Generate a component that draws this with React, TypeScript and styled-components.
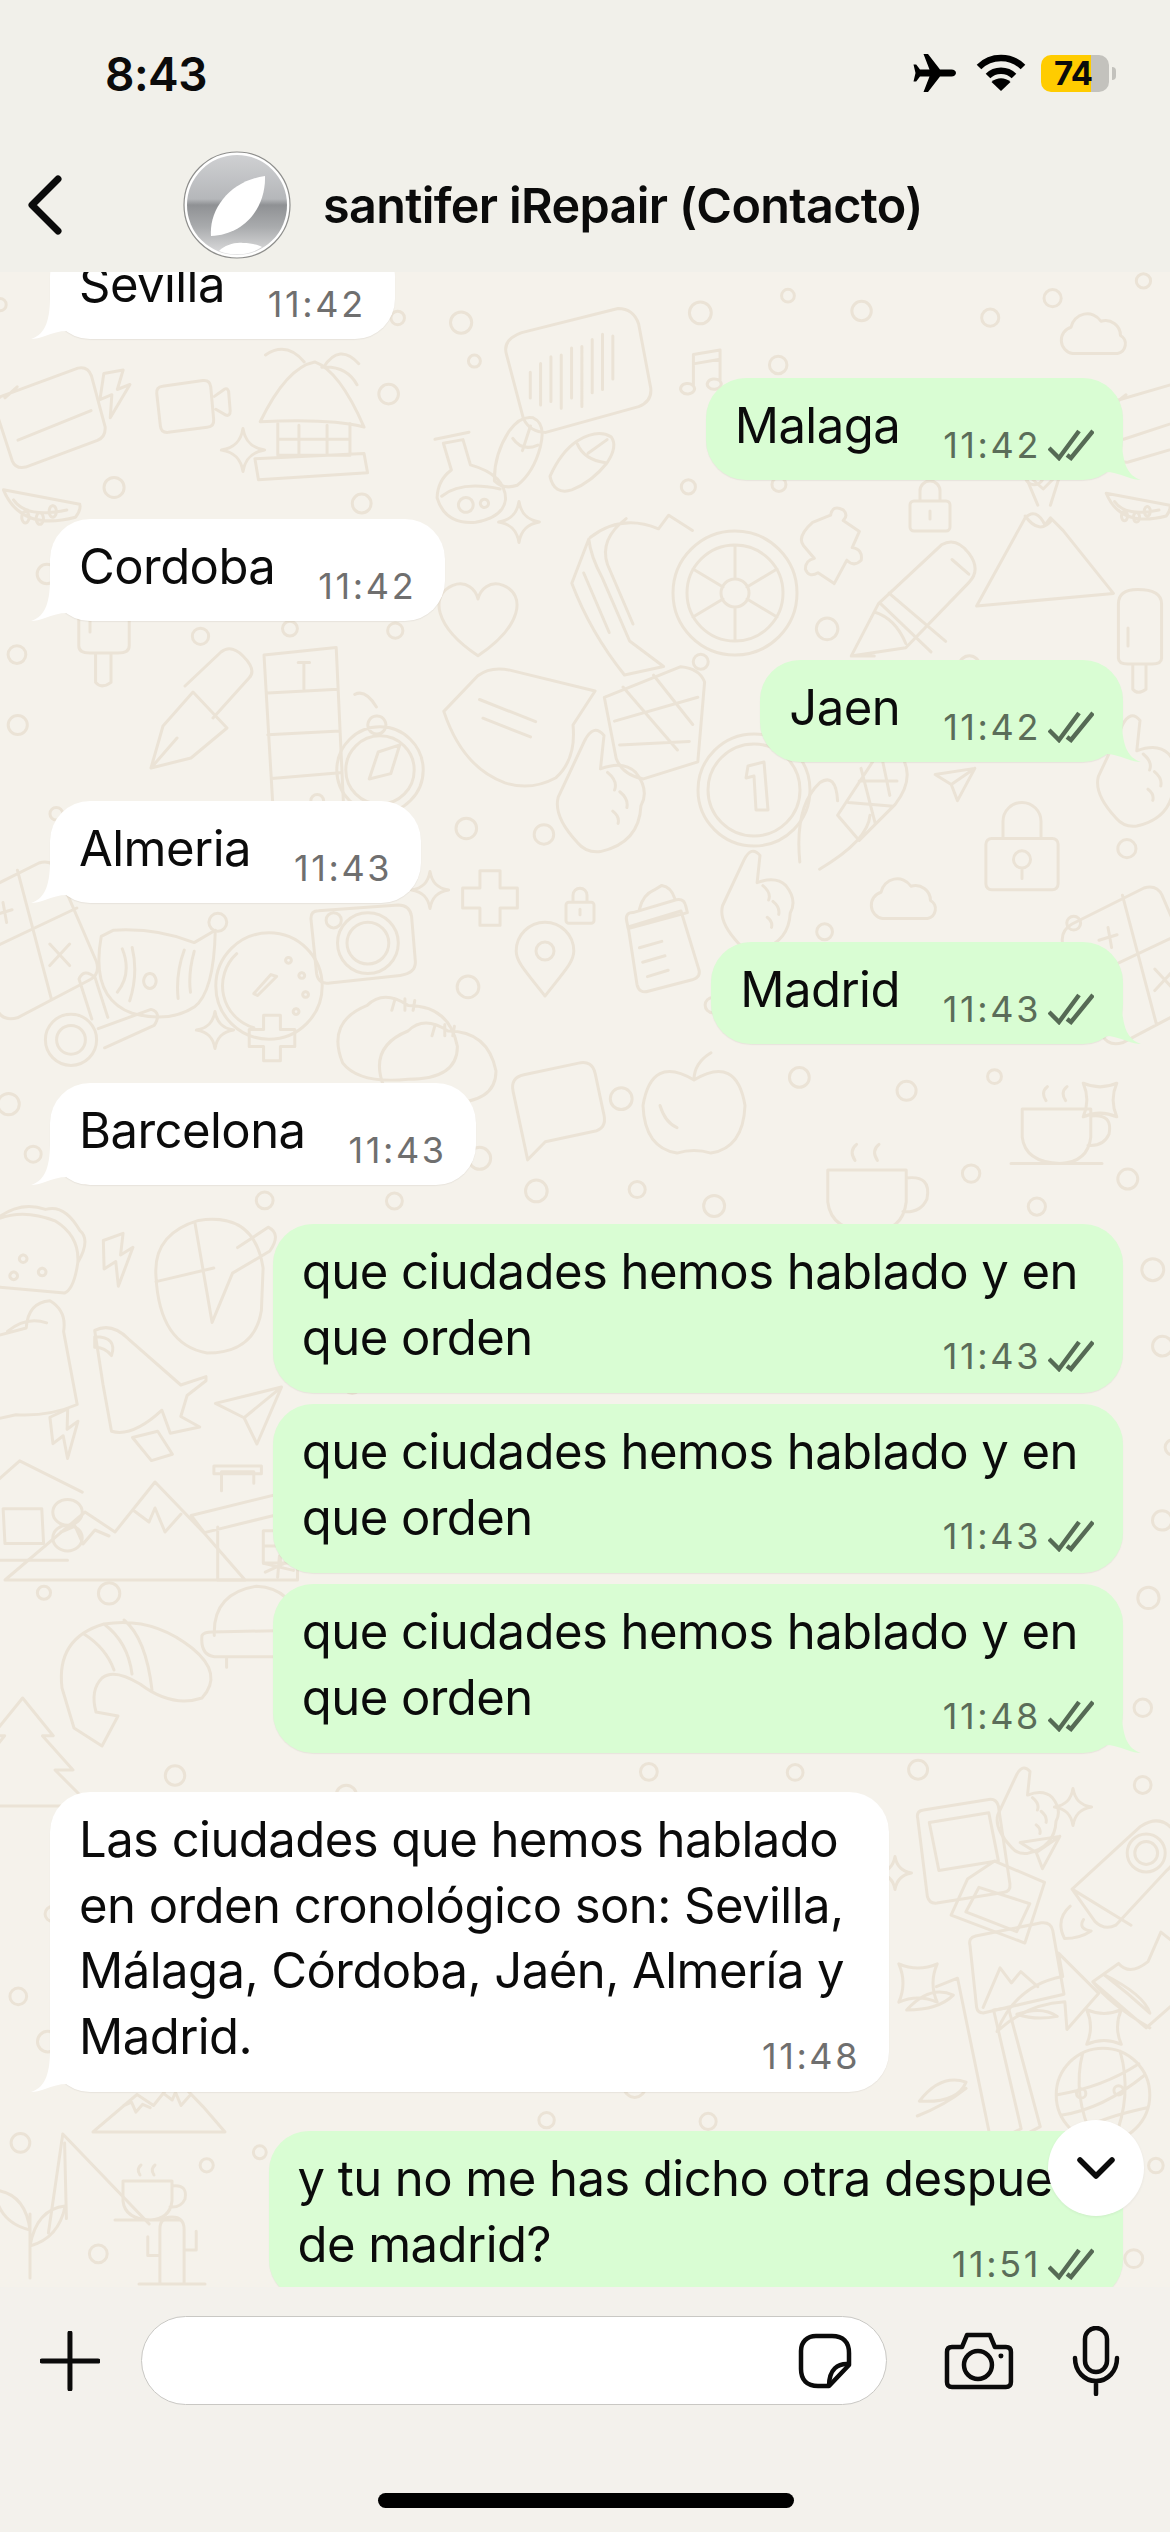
import React from "react";
import styled, { createGlobalStyle } from "styled-components";

const Global = createGlobalStyle`
  html, body { margin: 0; padding: 0; background: #f3f1ec; }
  * { box-sizing: border-box; }
`;

const Page = styled.div`
  width: 1170px;
  height: 2532px;
  display: flex;
  flex-direction: column;
  font-family: Inter, "Liberation Sans", sans-serif;
  color: #0b0b0b;
  overflow: hidden;
`;

const Top = styled.header`
  height: 272px;
  flex: none;
  background: #f1f0ea;
  display: flex;
  flex-direction: column;
`;

const StatusBar = styled.div`
  height: 148px;
  display: flex;
  align-items: flex-start;
  justify-content: space-between;
  padding: 48px 54px 0 105px;
`;

const Clock = styled.div`
  font-size: 46px;
  font-weight: 600;
  line-height: 52px;
  letter-spacing: -0.5px;
`;

const StatusIcons = styled.div`
  display: flex;
  align-items: center;
  padding-top: 6px;
  gap: 19px;
`;

const Battery = styled.div`
  width: 68px;
  height: 37px;
  border-radius: 10px;
  background: linear-gradient(90deg, #ffcc00 0 50px, #c3c2bd 50px);
  font-size: 33px;
  font-weight: 700;
  line-height: 37px;
  letter-spacing: -0.5px;
  padding-left: 13px;
  position: relative;
  margin: 0 7px 0 -4px;
  &::after {
    content: "";
    position: absolute;
    right: -7px;
    top: 12px;
    width: 4px;
    height: 13px;
    border-radius: 0 6px 6px 0;
    background: #c3c2bd;
  }
`;

const NavBar = styled.div`
  flex: 1;
  display: flex;
  align-items: center;
  padding: 0 0 10px 27px;
`;

const BackIcon = styled.svg`
  width: 36px;
  height: 60px;
  margin-right: 120px;
`;

const Avatar = styled.svg`
  width: 108px;
  height: 108px;
  margin-right: 32px;
`;

const Title = styled.div`
  font-size: 48.5px;
  font-weight: 600;
  letter-spacing: -0.65px;
  white-space: nowrap;
`;

const Chat = styled.main`
  flex: 1;
  min-height: 0;
  background: #f5f2eb;
  position: relative;
  overflow: hidden;
`;

const Wallpaper = styled.svg`
  position: absolute;
  inset: 0;
  width: 1170px;
  height: 2015px;
`;

const List = styled.div`
  position: relative;
  display: flex;
  flex-direction: column;
  margin-top: -35px;
  padding: 0 47px 0 50px;
`;

const Bubble = styled.div<{ $out?: boolean; $tight?: boolean; $stacked?: boolean }>`
  position: relative;
  align-self: ${(p) => (p.$out ? "flex-end" : "flex-start")};
  display: flex;
  flex-direction: ${(p) => (p.$stacked ? "column" : "row")};
  min-height: 102px;
  margin-top: ${(p) => (p.$tight ? "11px" : "39px")};
  padding: 15px ${(p) => (p.$stacked ? "45px" : "29px")} 15px 29px;
  padding-bottom: ${(p) => (p.$stacked ? "16.600px" : "15px")};
  background: ${(p) => (p.$out ? "#d9fdd3" : "#ffffff")};
  border-radius: 40px;
  box-shadow: 0 1px 1px rgba(90, 80, 60, 0.08);
  &:first-child { margin-top: 0; }
`;

const Text = styled.div`
  font-size: 49px;
  line-height: 65.7px;
  white-space: nowrap;
  letter-spacing: -0.55px;
  color: #0b0b0b;
`;

const Meta = styled.div<{ $out?: boolean; $stacked?: boolean }>`
  display: flex;
  align-items: center;
  align-self: flex-end;
  gap: 7px;
  height: 40px;
  margin-top: ${(p) => (p.$stacked ? "-34px" : "31px")};
  margin-left: ${(p) => (p.$stacked ? "0" : "43px")};
  margin-right: ${(p) => (p.$stacked ? "-16px" : "0")};
  font-size: 36px;
  line-height: 40px;
  letter-spacing: 2.6px;
  color: ${(p) => (p.$out ? "#5b6d59" : "#6f6f6f")};
`;

const Ticks = styled.svg`
  width: 46px;
  height: 32px;
`;

const Tail = styled.svg<{ $out?: boolean }>`
  position: absolute;
  bottom: 0;
  width: 36px;
  height: 44px;
  ${(p) => (p.$out ? "right: -18px;" : "left: -19px;")}
`;

const Footer = styled.footer`
  height: 245px;
  flex: none;
  background: #f3f1ec;
  display: flex;
  flex-direction: column;
  position: relative;
`;

const InputRow = styled.div`
  display: flex;
  align-items: center;
  padding: 29px 50px 0 40px;
  height: 118px;
`;

const Plus = styled.svg`
  width: 60px;
  height: 60px;
  margin-right: 41px;
`;

const InputPill = styled.div`
  width: 747px;
  height: 89px;
  border-radius: 45px;
  background: #fff;
  border: 1.5px solid #c9c8c4;
  display: flex;
  align-items: center;
  justify-content: flex-end;
  padding-right: 34px;
  margin-right: 56px;
`;

const Sticker = styled.svg`
  width: 54px;
  height: 56px;
`;

const CameraIcon = styled.svg`
  width: 72px;
  height: 58px;
  margin-right: 57px;
`;

const MicIcon = styled.svg`
  width: 48px;
  height: 70px;
  flex: none;
`;

const HomeBar = styled.div`
  position: absolute;
  left: 378px;
  bottom: 24px;
  width: 416px;
  height: 15px;
  border-radius: 8px;
  background: #000;
`;

const ScrollButton = styled.div`
  position: absolute;
  left: 1048px;
  top: 1848px;
  width: 96px;
  height: 96px;
  border-radius: 50%;
  background: #fff;
  box-shadow: 0 1px 3px rgba(0, 0, 0, 0.06);
  display: flex;
  align-items: center;
  justify-content: center;
`;

const c = (x: number, y: number, r: number) =>
  `M${x - r} ${y}a${r} ${r} 0 1 0 ${2 * r} 0a${r} ${r} 0 1 0 ${-2 * r} 0`;

const shapes: Record<string, string> = {
  heart: "M0 34C-42 6-46-24-24-33C-11-38-2-29 0-20C2-29 11-38 24-33C46-24 42 6 0 34Z",
  star: "M0-30C3-12 12-3 30 0C12 3 3 12 0 30C-3 12-12 3-30 0C-12-3-3-12 0-30Z",
  starq: "M-24-24C-8-17 8-17 24-24C17-8 17 8 24 24C8 17-8 17-24 24C-17 8-17-8-24-24Z",
  plane: "M-32-12L32-22L4 30L-6 4ZM-6 4L32-22",
  bolt: "M-12-32L-24 4L-6 0L-14 32L22-10L3-6L16-32Z",
  pin: `M0 40C-22 12-32 2-32-10A32 32 0 0 1 32-10C32 2 22 12 0 40Z${c(0, -10, 10)}`,
  lock: `M-32-10h64a6 6 0 0 1 6 6v42a6 6 0 0 1-6 6h-64a6 6 0 0 1-6-6v-42a6 6 0 0 1 6-6ZM-20-10v-18a20 20 0 0 1 40 0v18${c(0, 12, 9)}M0 21v11`,
  lockS: "M-16-4h32a4 4 0 0 1 4 4v22a4 4 0 0 1-4 4h-32a4 4 0 0 1-4-4V0a4 4 0 0 1 4-4ZM-10-4v-10a10 10 0 0 1 20 0v10M0 6v8",
  camera: `M-50-36Q-58-36-58-28L-52 30Q-50 42-38 40L36 32Q52 30 52 18L48-30Q46-42 34-42Z${c(2, -2, 32)}${c(2, -2, 22)}${c(-34, -26, 8)}`,
  video: "M-34-26L22-34Q32-35 33-25L37 20Q38 30 28 31L-26 38Q-36 39-37 29L-42-16Q-43-25-34-26ZM38-12L52-22Q58-24 58-16L60 8Q60 16 54 14L40 6",
  cloud: "M-30 18A18 18 0 0 1-32-17A22 22 0 0 1 8-25A20 20 0 0 1 34-6A13 13 0 0 1 30 18Z",
  polaroid: "M-44-40Q-46-48-38-49L30-60Q38-61 40-53L52 28Q53 36 45 37L-24 48Q-32 49-34 41ZM-32-36L30-46L40 4L-22 14Z",
  polaroid2: "M-36-34L-3-56L58-30L34 44L-56 10ZM-22-24L40-4L24 30L-38 6Z",
  image: "M-50-22Q-52-30-44-32L26-46Q36-47 38-38L50 30L-36 50Q-42 50-43 44ZM-36 44L-18 2L-6 18L4 6L22 22",
  rocket: `M-42 18L30-48Q52-62 66-42Q78-20 58-2L4 56Q-8 62-18 52Z M-42 18L20 56${c(36, -20, 20)}${c(36, -20, 12)}M-44 36Q-60 50-50 70Q-34 70-22 62Q-36 60-30 50`,
  shuttle: "M-46-52Q-30-60-14-44L36 0L60-8L60-4L42 10L36 30L54 40L26 46L18 24Q-10 50-30 44L-38 0L-46-52ZM-46-46Q-24-46-30-28Q-36-36-46-36ZM-10 50L14 44L28 66L8 72Z",
  arrow: "M-50 42Q-32-2 12-10L8-32L46 6L16 40L14 14Q-22 16-50 42Z",
  mountains: "M-140 58L-60-10L-30 10L10-40L60 12L100 58ZM-84 10L-70 4L-62 22L-50 8L-36 14M-12-12L4 0L10-14L20 10L36-8",
  house: "M-62-10L60-40L74-22L-48 8ZM-34 2V58H50V-20M-30-36V-56H4V-44M-38-62H12V-54H-38ZM14 6H50V40H14ZM32 6V40M14 22H50",
  cabin: "M-30-30L4-60L72-26M-28-28V48H56M-14-8H28L30 30H-12ZM56-18a16 14 0 1 1 0 28a16 14 0 1 1 0-28M56 10a16 14 0 1 1 0 28a16 14 0 1 1 0-28",
  taco: "M-48 30Q-64-10-44-36Q-16-50 20-36Q46-20 44 8Q40 36 30 40L-38 34ZM-44-36Q-18-58 10-48Q30-54 46-26Q58-16 44 8M-14 0a4 4 0 1 0 1 0M-24 18a4 4 0 1 0 1 0M6 14a4 4 0 1 0 1 0",
  shrimp: "M-70 20Q-76-30-28-44Q20-52 60-20Q92 6 70 30Q40 40 8 16Q-18 0-30 10Q-42 22-36 44L-14 48L-30 78L-58 60ZM-48-34Q-26-20-18 2M-28-44Q-4-26 0 6M-8-48Q14-30 20 22",
  tree: "M-6-60L28-18L16-18L50 20L30 20L70 60L-70 60L-40 20L-56 20L-26-18L-40-18Z",
  globe: `${c(0, 0, 60)}M-54 26Q0 18 54-26M-60 0Q0-10 46-40M-36 48Q0 28 58 16M-26-54Q-40 0-12 58M22-56Q38 0 14 58${c(-28, -2, 6)}${c(20, -6, 6)}`,
  bamboo: "M-44-72L-24-80L8 76L36 62L10-50L24-52L54 60L24 76M-72-50Q-50-74-28-64Q-42-50-72-50M-60 36Q-40 10-16 18Q-24 38-60 36M-62 50Q-36 40-16 24M32-46Q56-54 70-44Q50-40 32-46",
  slice: "M-48 2L-20-18Q-8-4 12-20L26-52L54-30Q70-10 60 8L10 52ZM-48 2Q-30 26 14 52M-36-6Q-10 14 14 36Q8 16-36-6",
  wheel: `${c(0, 0, 62)}${c(0, 0, 48)}${c(0, 0, 14)}M0-48V-14M0 14V48M-42-24L-12-6M42-24L12-6M-42 24L-12 6M42 24L12 6`,
  backpack: "M-70-62Q-34-90 10-72L22-88L50-70M-92-8L-72-60Q-70-40-56-14L-24 60L16 90L-30 100Q-70 50-92-8ZM-50-30L-20 40M-78-20L-48 50M-28-84Q-60-60-50-30",
  gauge: `${c(0, 0, 56)}M-34-34A46 46 0 0 0-16 44M8-10L-12 10L-16 8L2-12Z M20-30a3 3 0 1 0 1 0M34-14a3 3 0 1 0 1 0M38 6a3 3 0 1 0 1 0M28 24a3 3 0 1 0 1 0`,
  clock: `${c(0, 0, 56)}${c(0, 0, 46)}M-6-24L10-28L14 20L2 20L0-14L-8-12Z`,
  bottle: "M-36-10L30-30L52 42Q56 52 44 56L-10 70Q-22 74-25 62ZM-38-18Q-40-28-30-28L24-44Q34-46 36-36L38-28L-36-8ZM-22-32Q-18-50-4-56L6-62Q18-60 22-46M-22 16L6 8M-18 34L10 26M-12 52L14 44",
  flip: "M-24 50Q-36 16-26-22Q-18-48 0-50Q20-48 22-14Q24 22 8 46Q-8 58-24 50ZM-18-14Q0 0 18-16M0-2V-38",
  flip2: "M-50 24Q-34-12-10-28Q20-46 40-34Q50-20 34 4Q12 32-18 44Q-44 52-50 24ZM-10-24Q0 0 32 4M6-10L34-30",
  flask: `M-8-48L16-44L14-12Q50 14 40 42Q30 62-4 56Q-40 46-38 12Q-30-8-10-14ZM-16-56L26-50M-32 12Q-4 2 38 28${c(-8, 32, 9)}${c(14, 38, 5)}`,
  melon: "M-48-28Q-24 30 52 10Q60 0 58-8ZM-34-14Q-16 12 40 0M-18 2a5 8 0 1 0 1 0M2 4a5 8 0 1 0 1 0M20-6a5 8 0 1 0 1 0",
  volcano: "M-76 60L-22-38Q-10-50 0-30L6-38L20-24L76 46ZM-22-40Q-6-18 8-36M-8-52L-24-90L-2-70L18-90L6-52",
  puzzle: "M-26-34L-6-42Q-4-54 8-48Q14-42 8-36L26-24L18-6Q30-4 28 8Q20 16 12 8L-2 34L-20 22Q-30 28-34 18Q-34 8-24 6L-36-8Q-44-18-26-34Z",
  pencil: "M-56 42L-30-8L30-64Q44-72 56-56Q68-40 56-28L-4 34ZM-34 0Q-14 6-4 30M-56 42L-34 42M-20-18L34 28M-28-8L20 38M40-50L56-36",
  pop: "M-36-60Q-36-84-4-84Q36-84 36-60L36 30Q36 40 20 40L-20 40Q-36 40-36 30ZM-12 40V82Q-4 92 10 82V40M-20-20V10",
  pen: "M-50 52L-38 10L-8-24L26 12L-10 42ZM-50 52L-24 22M-16-30L20-64Q30-72 42-60Q56-46 48-38L12 2",
  ruler: "M-40-80L36-88L44 84L-30 90ZM-36-40L38-44M-32 50L40 44M-4-72L8-72M2-72V-44M-36 4L40 0",
  compass: `${c(0, 0, 48)}${c(0, 0, 38)}M-12 10L-2-20L22-28L12 4ZM-4-60a10 10 0 1 0 1 0M-4-70Q-16-90-28-84`,
  note: "M-72-16L-32-58Q-16-70 8-64L106-40L80 0Q84 40 60 62Q30 78 0 68Q-50 50-72-16ZM-30-30L36-4M-26-8L30 14",
  rubik: "M-62-22L28-58Q50-56 56-40L48 54L-16 74Q-40 70-48 50ZM-40-34L24 40M-4-48L42 10M-50 6L48-22M-44 34L38 30",
  hand: "M-30 60Q-58 30-52 8L-22-56Q-12-76 0-62L-4-24Q22-34 36-20Q52 0 42 18Q40 60-4 70Q-20 72-30 60ZM4-20Q16-10 12 0M18 2Q28 10 26 20M10 24Q18 30 16 38",
  corn: "M-48 60Q-54-2-26-28Q-8-40-6-8M-26 68Q28 36 30 8M-6 8L36-56Q54-72 68-52Q78-30 58-4L18 36ZM6-6L56-2M18-30L60-30M20-44L36 18M42-62L52-14",
  hut: "M-60 2Q-30-60 2-66Q30-56 58 8Q20-2-60 2ZM-40 4V40H42V4M-16 6V40M16 6V40M-40 22H42M-66 44L58 38L62 60L-62 68ZM-10-66Q-30-90-54-74M12-60Q30-88 52-64M10-60Q38-62 50-40",
  calendar: "M-64-30L46-62Q60-64 64-50L78 22Q78 36 66 40L-36 70Q-50 72-54 60L-72-12Q-74-24-64-30ZM-58-28L-40-42M-44 32L60-2",
  wave: "M-62-26L50-54Q68-54 74-36L88 38Q90 54 74 60L-34 90Q-52 90-60 74L-80-2Q-84-18-62-26ZM-52 20V50M-40 10V58M-28 2V54M-16 0V62M-4-8V50M8-10V60M20-18V44M32-24V40M44-22V28",
  note2: "M-20 24V-30L26-38V14M-20 24a12 9 0 1 1-1-1M26 16a12 9 0 1 1-1-1M-20-14L26-22",
  calc: "M-70-40L10-80Q24-84 30-72L74 30Q78 44 66 50L-14 92Q-30 96-36 84L-80-16Q-84-32-70-40ZM-58 22L52-30M-14-72L24 72M-40-22L-20-28M-30-36L-26-14M22 10L44 34M44 10L22 34",
  catbowl: "M-90-30Q-108 70-40 94Q20 110 60 84Q92 60 94-40L60-20Q0-44-70-40ZM-56-10Q-40 30-64 60M-40-12Q-30 30-44 74M44-8Q30 30 34 70M60-6Q50 30 54 60M-12 30a10 12 0 1 0 1 0",
  mouse: "M-60-10Q-64-60-10-76Q56-86 66-20L64 30Q56 80 0 80Q-56 70-60-10ZM-60-4L8-20M-14-72L6 44L30-14L74-40Q88-60 72-68L36-44",
  boot: "M-60-26L-8-40Q-6-70 20-72Q40-60 36-36L52 50Q20 64-20 62L-56 70M-30-36Q-8-54 16-46",
  beanie: "M-44 4Q-46-44 4-52Q46-50 54-4M-58 4Q-60 26-44 28H50Q68 26 64 6Q62-2 50-2L-46 0Q-56 0-58 4ZM-30 28V40M28-62L30-86M12-78L46-70M14-68L44-82",
  apple: "M0-20Q-50-50-60 10Q-58 60-20 66Q0 60 20 66Q58 60 60 10Q50-50 0-20ZM0-20Q0-40 20-52M-40 10Q-34 30-20 36",
  cup: "M-54-30H44V10Q40 46 0 48Q-50 46-54 10ZM44-20Q76-24 70 6Q62 24 40 22M-20-42Q-28-54-18-62M8-42Q0-54 10-62M-70 48H60",
  triangle: "M-54 70L-38-40L58 60M-36-30L-34 54",
  plant: "M0 60V-20M0 0Q-40-10-44-50Q-6-46 0 0ZM0 20Q36 10 44-30Q8-26 0 20Z",
  cactus: "M-22 62V-38Q-22-60 0-60Q22-60 22-38V62ZM-22 10H-44V-24M22 0H44V-34M-60 62H60",
  bubble2: "M-60 40V-40Q-60-60-40-60H40Q60-60 60-40V20Q60 40 40 40H-30L-60 60Z",
  dumpling: "M-70 40Q-90-10-40-30Q-20-50 10-30Q60-30 70 20Q70 60 10 60Q-50 66-70 40ZM-6-38L-10-24M6-38L6-24M18-36L16-24",
  cross: "M-14-38H14V-14H38V14H14V38H-14V14H-38V-14H-14Z",
  scissors: `${c(-30, 6, 32)}${c(-30, 6, 18)}M-4-20L-20-70Q-14-84 0-72L16-22M4-8L70-32Q84-28 74-12L12 16`,
};

type Doodle = [string, number, number, number?, number?];

const doodles: Doodle[] = [
  ["calendar", 48, 415, 0.72, -4], ["hut", 313, 420, 0.88], ["video", 187, 405, 0.72], ["bolt", 116, 394, 0.7, -10],
  ["wave", 575, 355, 0.86], ["note2", 705, 372, 0.58], ["flip", 522, 452, 0.72, 18], ["flip2", 584, 460, 0.68],
  ["star", 243, 450, 0.72], ["flask", 463, 478, 0.82, -20], ["star", 519, 522, 0.68], ["melon", 38, 510, 0.72],
  ["wheel", 735, 593, 1.0], ["backpack", 650, 590, 0.85], ["volcano", 1045, 552, 0.9], ["lockS", 930, 505, 1],
  ["puzzle", 836, 553, 0.9], ["pencil", 910, 612, 1.05], ["heart", 478, 620, 1.05], ["pop", 104, 625, 0.7],
  ["pen", 201, 716, 1], ["ruler", 302, 731, 0.95], ["compass", 380, 770, 0.9], ["note", 505, 725, 0.85],
  ["rubik", 657, 716, 0.85], ["hand", 604, 790, 0.88], ["clock", 754, 790, 1], ["corn", 843, 808, 0.9],
  ["plane", 955, 782, 0.62], ["lock", 1022, 848, 0.95], ["calc", 30, 935, 0.9], ["catbowl", 157, 955, 0.62],
  ["camera", 366, 945, 0.95], ["gauge", 269, 986, 0.95], ["pin", 545, 960, 0.9], ["bottle", 657, 935, 0.8],
  ["cross", 490, 898, 0.72], ["cross", 272, 1038, 0.6], ["star", 215, 1030, 0.62], ["scissors", 95, 1035, 0.8],
  ["dumpling", 400, 1030, 0.82], ["dumpling", 440, 1055, 0.8], ["lockS", 580, 905, 0.7], ["star", 430, 890, 0.62],
  ["hand", 760, 900, 0.72], ["cloud", 905, 905, 0.75], ["starq", 1100, 1100, 0.7], ["apple", 694, 1097, 0.85],
  ["cup", 871, 1194, 0.8], ["cup", 1060, 1130, 0.7], ["bubble2", 560, 1110, 0.7, -12],
  ["taco", 36, 1255, 0.95], ["mouse", 207, 1285, 0.85], ["bolt", 120, 1260, 0.75, -20], ["shuttle", 143, 1385, 1.05],
  ["bolt", 67, 1434, 0.7, -25], ["plane", 250, 1413, 1.05, -5], ["boot", 33, 1362, 0.85], ["cabin", 16, 1516, 0.92],
  ["mountains", 145, 1522, 1], ["house", 250, 1525, 0.95], ["shrimp", 132, 1668, 1], ["beanie", 253, 1632, 0.88],
  ["tree", 28, 1752, 0.9], ["polaroid", 960, 1857, 0.96], ["polaroid2", 997, 1907, 0.82], ["image", 1017, 1966, 0.94],
  ["rocket", 1112, 1872, 0.95], ["arrow", 1050, 1987, 1.06], ["slice", 1137, 1980, 0.92], ["bamboo", 983, 2063, 1.06],
  ["globe", 1103, 2095, 0.78], ["star", 1073, 1807, 0.62], ["star", 895, 1873, 0.55], ["starq", 918, 1983, 0.8],
  ["starq", 1104, 2027, 0.72], ["plane", 1040, 1850, 0.62], ["triangle", 97, 2170, 0.9], ["cup", 150, 2196, 0.5],
  ["plant", 30, 2230, 0.8], ["cactus", 172, 2250, 0.55], ["mountains", 170, 2100, 0.55], ["cloud", 1095, 340, 0.75],
  ["hand", 1030, 1810, 0.62], ["pop", 1140, 640, 0.6], ["melon", 1135, 510, 0.6], ["calendar", 1150, 420, 0.6],
  ["calc", 1135, 960, 0.9], ["hand", 1140, 770, 0.8],
];

const seeded = (n: number) => {
  const s = Math.sin(n * 127.1) * 43758.5453;
  return s - Math.floor(s);
};

const dots: [number, number, number][] = [];
for (let gy = 0; gy < 23; gy++) {
  for (let gx = 0; gx < 14; gx++) {
    const i = gy * 14 + gx;
    const x = gx * 86 + seeded(i) * 60;
    const y = 272 + gy * 88 + seeded(i + 500) * 60;
    const r = 6 + seeded(i + 900) * 5;
    const clear = doodles.every(([, dx, dy, s = 1]) => Math.hypot(dx - x, dy - y) > 62 * s + r + 4);
    if (clear) dots.push([x, y, r]);
  }
}

const Ticksvg = () => (
  <Ticks viewBox="0 0 46 32" fill="none" stroke="#566a55" strokeWidth="4.4">
    <path d="M1 19l10 10L31 2" />
    <path d="M19 26l4 3L45 2" />
  </Ticks>
);

const TailIn = () => (
  <Tail viewBox="0 0 36 44" fill="#ffffff">
    <path d="M0 44C12 40 19 30 19 2L36 36C28 36 22 38 14 41C9 43 4 44 0 44Z" />
  </Tail>
);

const TailOut = () => (
  <Tail $out viewBox="0 0 36 44" fill="#d9fdd3">
    <path d="M36 44C24 40 17 30 17 2L0 36C8 36 14 38 22 41C27 43 32 44 36 44Z" />
  </Tail>
);

type Msg = { lines: string[]; time: string; out?: boolean; tight?: boolean; tail?: boolean };

const messages: Msg[] = [
  { lines: ["Sevilla"], time: "11:42", tail: true },
  { lines: ["Malaga"], time: "11:42", out: true, tail: true },
  { lines: ["Cordoba"], time: "11:42", tail: true },
  { lines: ["Jaen"], time: "11:42", out: true, tail: true },
  { lines: ["Almeria"], time: "11:43", tail: true },
  { lines: ["Madrid"], time: "11:43", out: true, tail: true },
  { lines: ["Barcelona"], time: "11:43", tail: true },
  { lines: ["que ciudades hemos hablado y en", "que orden"], time: "11:43", out: true },
  { lines: ["que ciudades hemos hablado y en", "que orden"], time: "11:43", out: true, tight: true },
  { lines: ["que ciudades hemos hablado y en", "que orden"], time: "11:48", out: true, tight: true, tail: true },
  {
    lines: [
      "Las ciudades que hemos hablado",
      "en orden cronológico son: Sevilla,",
      "Málaga, Córdoba, Jaén, Almería y",
      "Madrid.",
    ],
    time: "11:48",
    tail: true,
  },
  { lines: ["y tu no me has dicho otra despues", "de madrid?"], time: "11:51", out: true },
];

export default function App() {
  return (
    <Page>
      <Global />
      <Top>
        <StatusBar>
          <Clock>8:43</Clock>
          <StatusIcons>
            <svg width="44" height="38" viewBox="0 0 44 38" fill="#000">
              <path d="M43 19c0-2-2-3.4-4.5-3.4H27L15 0h-4.5l6 15.6H7L3.2 10.5H.5L2.5 19 .5 27.5h2.7L7 22.4h9.5L10.5 38H15l12-15.6h11.5C41 22.4 43 21 43 19z" />
            </svg>
            <svg width="50" height="38" viewBox="0 0 50 38" fill="none" stroke="#000" strokeWidth="6.5">
              <path d="M3 13C15 1 35 1 47 13" />
              <path d="M12 22C19 15 31 15 38 22" />
              <path d="M25 37L15.500 28C21 23 29 23 34.500 28Z" fill="#000" stroke="none" />
            </svg>
            <Battery>74</Battery>
          </StatusIcons>
        </StatusBar>
        <NavBar>
          <BackIcon viewBox="0 0 36 60" fill="none" stroke="#0b0b0b" strokeWidth="7" strokeLinecap="round" strokeLinejoin="round">
            <path d="M31 4L5 30L31 56" />
          </BackIcon>
          <Avatar viewBox="0 0 108 108">
            <defs>
              <linearGradient id="orb" x1="0" y1="0" x2="0" y2="1">
                <stop offset="0" stopColor="#cfd0d2" />
                <stop offset="0.44" stopColor="#b5b7ba" />
                <stop offset="0.5" stopColor="#8f9194" />
                <stop offset="0.72" stopColor="#a9abad" />
                <stop offset="1" stopColor="#dededf" />
              </linearGradient>
            </defs>
            <circle cx="54" cy="54" r="53" fill="#fff" stroke="#8e8e8c" strokeWidth="1.2" />
            <circle cx="54" cy="54" r="50" fill="url(#orb)" />
            <path d="M28 85C26 58 47 30 82 25C83 58 60 84 28 85Z" fill="#fff" />
            <path d="M36 100C42 94 52 91 60 92C68 92 76 94 79 96C66 105 48 105 36 100Z" fill="#fff" />
          </Avatar>
          <Title>santifer iRepair (Contacto)</Title>
        </NavBar>
      </Top>
      <Chat>
        <Wallpaper viewBox="0 272 1170 2015" fill="none" stroke="#ebe3d6" strokeWidth="3" strokeLinejoin="round" strokeLinecap="round">
          {doodles.map(([name, x, y, s = 1, r = 0], i) => (
            <path
              key={i}
              d={shapes[name]}
              vectorEffect="non-scaling-stroke"
              transform={`translate(${x} ${y}) rotate(${r}) scale(${s})`}
            />
          ))}
          {dots.map(([x, y, r], i) => (
            <circle key={i} cx={x} cy={y} r={r} />
          ))}
        </Wallpaper>
        <List>
          {messages.map((m, i) => {
            const stacked = m.lines.length > 1;
            return (
              <Bubble key={i} $out={m.out} $tight={m.tight} $stacked={stacked}>
                <Text>
                  {m.lines.map((l, j) => (
                    <div key={j}>{l}</div>
                  ))}
                </Text>
                <Meta $out={m.out} $stacked={stacked}>
                  <span>{m.time}</span>
                  {m.out && <Ticksvg />}
                </Meta>
                {m.tail && (m.out ? <TailOut /> : <TailIn />)}
              </Bubble>
            );
          })}
        </List>
        <ScrollButton>
          <svg width="40" height="24" viewBox="0 0 40 24" fill="none" stroke="#0b0b0b" strokeWidth="5.5" strokeLinecap="round" strokeLinejoin="round">
            <path d="M4 4L20 20L36 4" />
          </svg>
        </ScrollButton>
      </Chat>
      <Footer>
        <InputRow>
          <Plus viewBox="0 0 60 60" stroke="#0b0b0b" strokeWidth="5" strokeLinecap="round">
            <path d="M30 2V58M2 30H58" />
          </Plus>
          <InputPill>
            <Sticker viewBox="0 0 54 56" fill="none" stroke="#0b0b0b" strokeWidth="4.500" strokeLinejoin="round">
              <path d="M18 3H34C45 3 51 9 51 20V32L31 53H20C9 53 3 47 3 36V18C3 9 9 3 18 3Z" />
              <path d="M51 31C40 30 31 36 31 53" />
            </Sticker>
          </InputPill>
          <CameraIcon viewBox="0 0 72 58" fill="none" stroke="#0b0b0b" strokeWidth="4.500" strokeLinejoin="round">
            <path d="M9 15H19L24 3H47L52 15H63Q68 15 68 20V50Q68 55 63 55H9Q4 55 4 50V20Q4 15 9 15Z" />
            <circle cx="35" cy="33" r="14" />
            <circle cx="58" cy="24" r="2.500" fill="#0b0b0b" stroke="none" />
          </CameraIcon>
          <MicIcon viewBox="0 0 48 70" fill="none" stroke="#0b0b0b" strokeWidth="4.500" strokeLinecap="round">
            <rect x="13" y="2" width="22" height="44" rx="11" />
            <path d="M3 32C3 45 12 55 24 55C36 55 45 45 45 32M24 55V68" />
          </MicIcon>
        </InputRow>
        <HomeBar />
      </Footer>
    </Page>
  );
}
